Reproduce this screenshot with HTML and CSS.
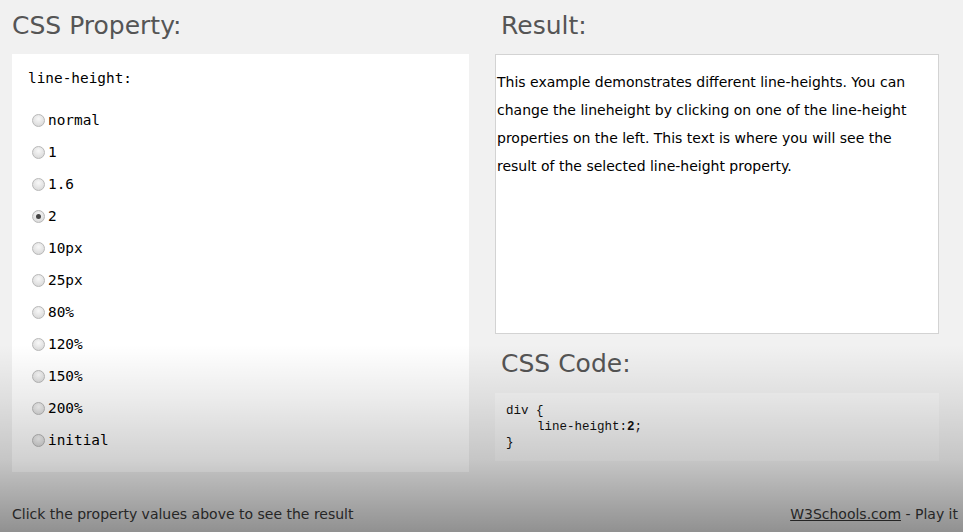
FILE: index.html
```html
<!DOCTYPE html>
<html>
<head>
<meta charset="utf-8">
<link rel="stylesheet" href="styles.css">
</head>
<body>
<div class="page">
  <div class="columns">
    <section class="col-left">
      <h2 class="heading">CSS Property:</h2>
      <div class="prop-box">
        <div class="prop-title">line-height:</div>
        <ul class="options">
          <li class="option"><span class="radio"></span>normal</li>
          <li class="option"><span class="radio"></span>1</li>
          <li class="option"><span class="radio"></span>1.6</li>
          <li class="option"><span class="radio checked"></span>2</li>
          <li class="option"><span class="radio"></span>10px</li>
          <li class="option"><span class="radio"></span>25px</li>
          <li class="option"><span class="radio"></span>80%</li>
          <li class="option"><span class="radio"></span>120%</li>
          <li class="option"><span class="radio"></span>150%</li>
          <li class="option"><span class="radio"></span>200%</li>
          <li class="option"><span class="radio"></span>initial</li>
        </ul>
      </div>
    </section>
    <section class="col-right">
      <h2 class="heading heading-indent">Result:</h2>
      <div class="result-box">
        <div class="result-text">This example demonstrates different line-heights. You can change the lineheight by clicking on one of the line-height properties on the left. This text is where you will see the result of the selected line-height property.</div>
      </div>
      <h2 class="heading heading-indent heading-code">CSS Code:</h2>
      <div class="code-box">
        <div class="code-line">div {</div>
        <div class="code-line code-indent"><span>line-height:</span><b>2</b><span>;</span></div>
        <div class="code-line">}</div>
      </div>
    </section>
  </div>
  <footer class="footer">
    <span class="footer-note">Click the property values above to see the result</span>
    <span class="footer-link"><a href="#">W3Schools.com</a> - Play it</span>
  </footer>
</div>
<div class="shade"></div>
</body>
</html>
```

FILE: styles.css
```css
html, body {
  margin: 0;
  padding: 0;
}
body {
  background: #f1f1f1;
  font-family: "DejaVu Sans", Verdana, sans-serif;
  color: #000;
  width: 963px;
  height: 532px;
  overflow: hidden;
}
.page {
  padding: 0 0 0 12px;
}
.columns {
  display: grid;
  grid-template-columns: 457px 444px;
  column-gap: 26px;
  align-items: start;
}
.heading {
  margin: 0;
  height: 54px;
  line-height: 51px;
  font-family: "DejaVu Sans", Verdana, sans-serif;
  font-weight: 400;
  font-size: 25px;
  color: #555;
}
.heading-indent {
  padding-left: 6px;
}
.heading-code {
  height: 59px;
  line-height: 59px;
}
.prop-box {
  background: #fff;
  padding: 14px 16px 16px 16px;
}
.prop-title {
  font-family: "DejaVu Sans Mono", "Liberation Mono", monospace;
  font-size: 14.4px;
  line-height: 20px;
}
.options {
  list-style: none;
  margin: 16px 0 0 0;
  padding: 0;
}
.option {
  display: flex;
  align-items: center;
  height: 32px;
  padding-left: 4px;
  font-family: "DejaVu Sans Mono", "Liberation Mono", monospace;
  font-size: 14.4px;
}
.radio {
  width: 11px;
  height: 11px;
  border: 1px solid #b8b8b8;
  border-radius: 50%;
  background: radial-gradient(circle at 50% 35%, #f8f8f8 0%, #e0e0e0 65%, #cfcfcf 100%);
  margin-right: 3px;
  position: relative;
  flex: none;
}
.radio.checked::after {
  content: "";
  position: absolute;
  left: 3px;
  top: 3px;
  width: 5px;
  height: 5px;
  border-radius: 50%;
  background: #444;
}
.result-box {
  background: #fff;
  border: 1px solid #d3d3d3;
  height: 278px;
  box-sizing: content-box;
}
.result-text {
  padding: 13px 24px 0 1px;
  font-size: 14px;
  line-height: 28px;
}
.code-box {
  background: #f7f7f7;
  padding: 10px 11px;
  font-family: "Liberation Mono", "DejaVu Sans Mono", monospace;
  font-size: 12.5px;
  line-height: 16px;
  color: #111;
}
.code-line {
  height: 16px;
  white-space: nowrap;
}
.code-indent {
  padding-left: 31px;
}
.code-box b {
  font-weight: 700;
}
.footer {
  display: flex;
  justify-content: space-between;
  align-items: center;
  margin-top: 32px;
  height: 20px;
  padding-right: 5px;
  font-size: 14px;
  color: #3a3a3a;
}
.footer-link a {
  color: #3a3a3a;
  text-decoration: underline;
}
.shade {
  position: absolute;
  left: 0;
  top: 0;
  width: 963px;
  height: 532px;
  pointer-events: none;
  background: linear-gradient(to bottom,
    rgba(0,0,0,0) 0px,
    rgba(0,0,0,0) 345px,
    rgba(0,0,0,0.08) 400px,
    rgba(0,0,0,0.18) 460px,
    rgba(0,0,0,0.30) 500px,
    rgba(0,0,0,0.40) 532px);
}
```
